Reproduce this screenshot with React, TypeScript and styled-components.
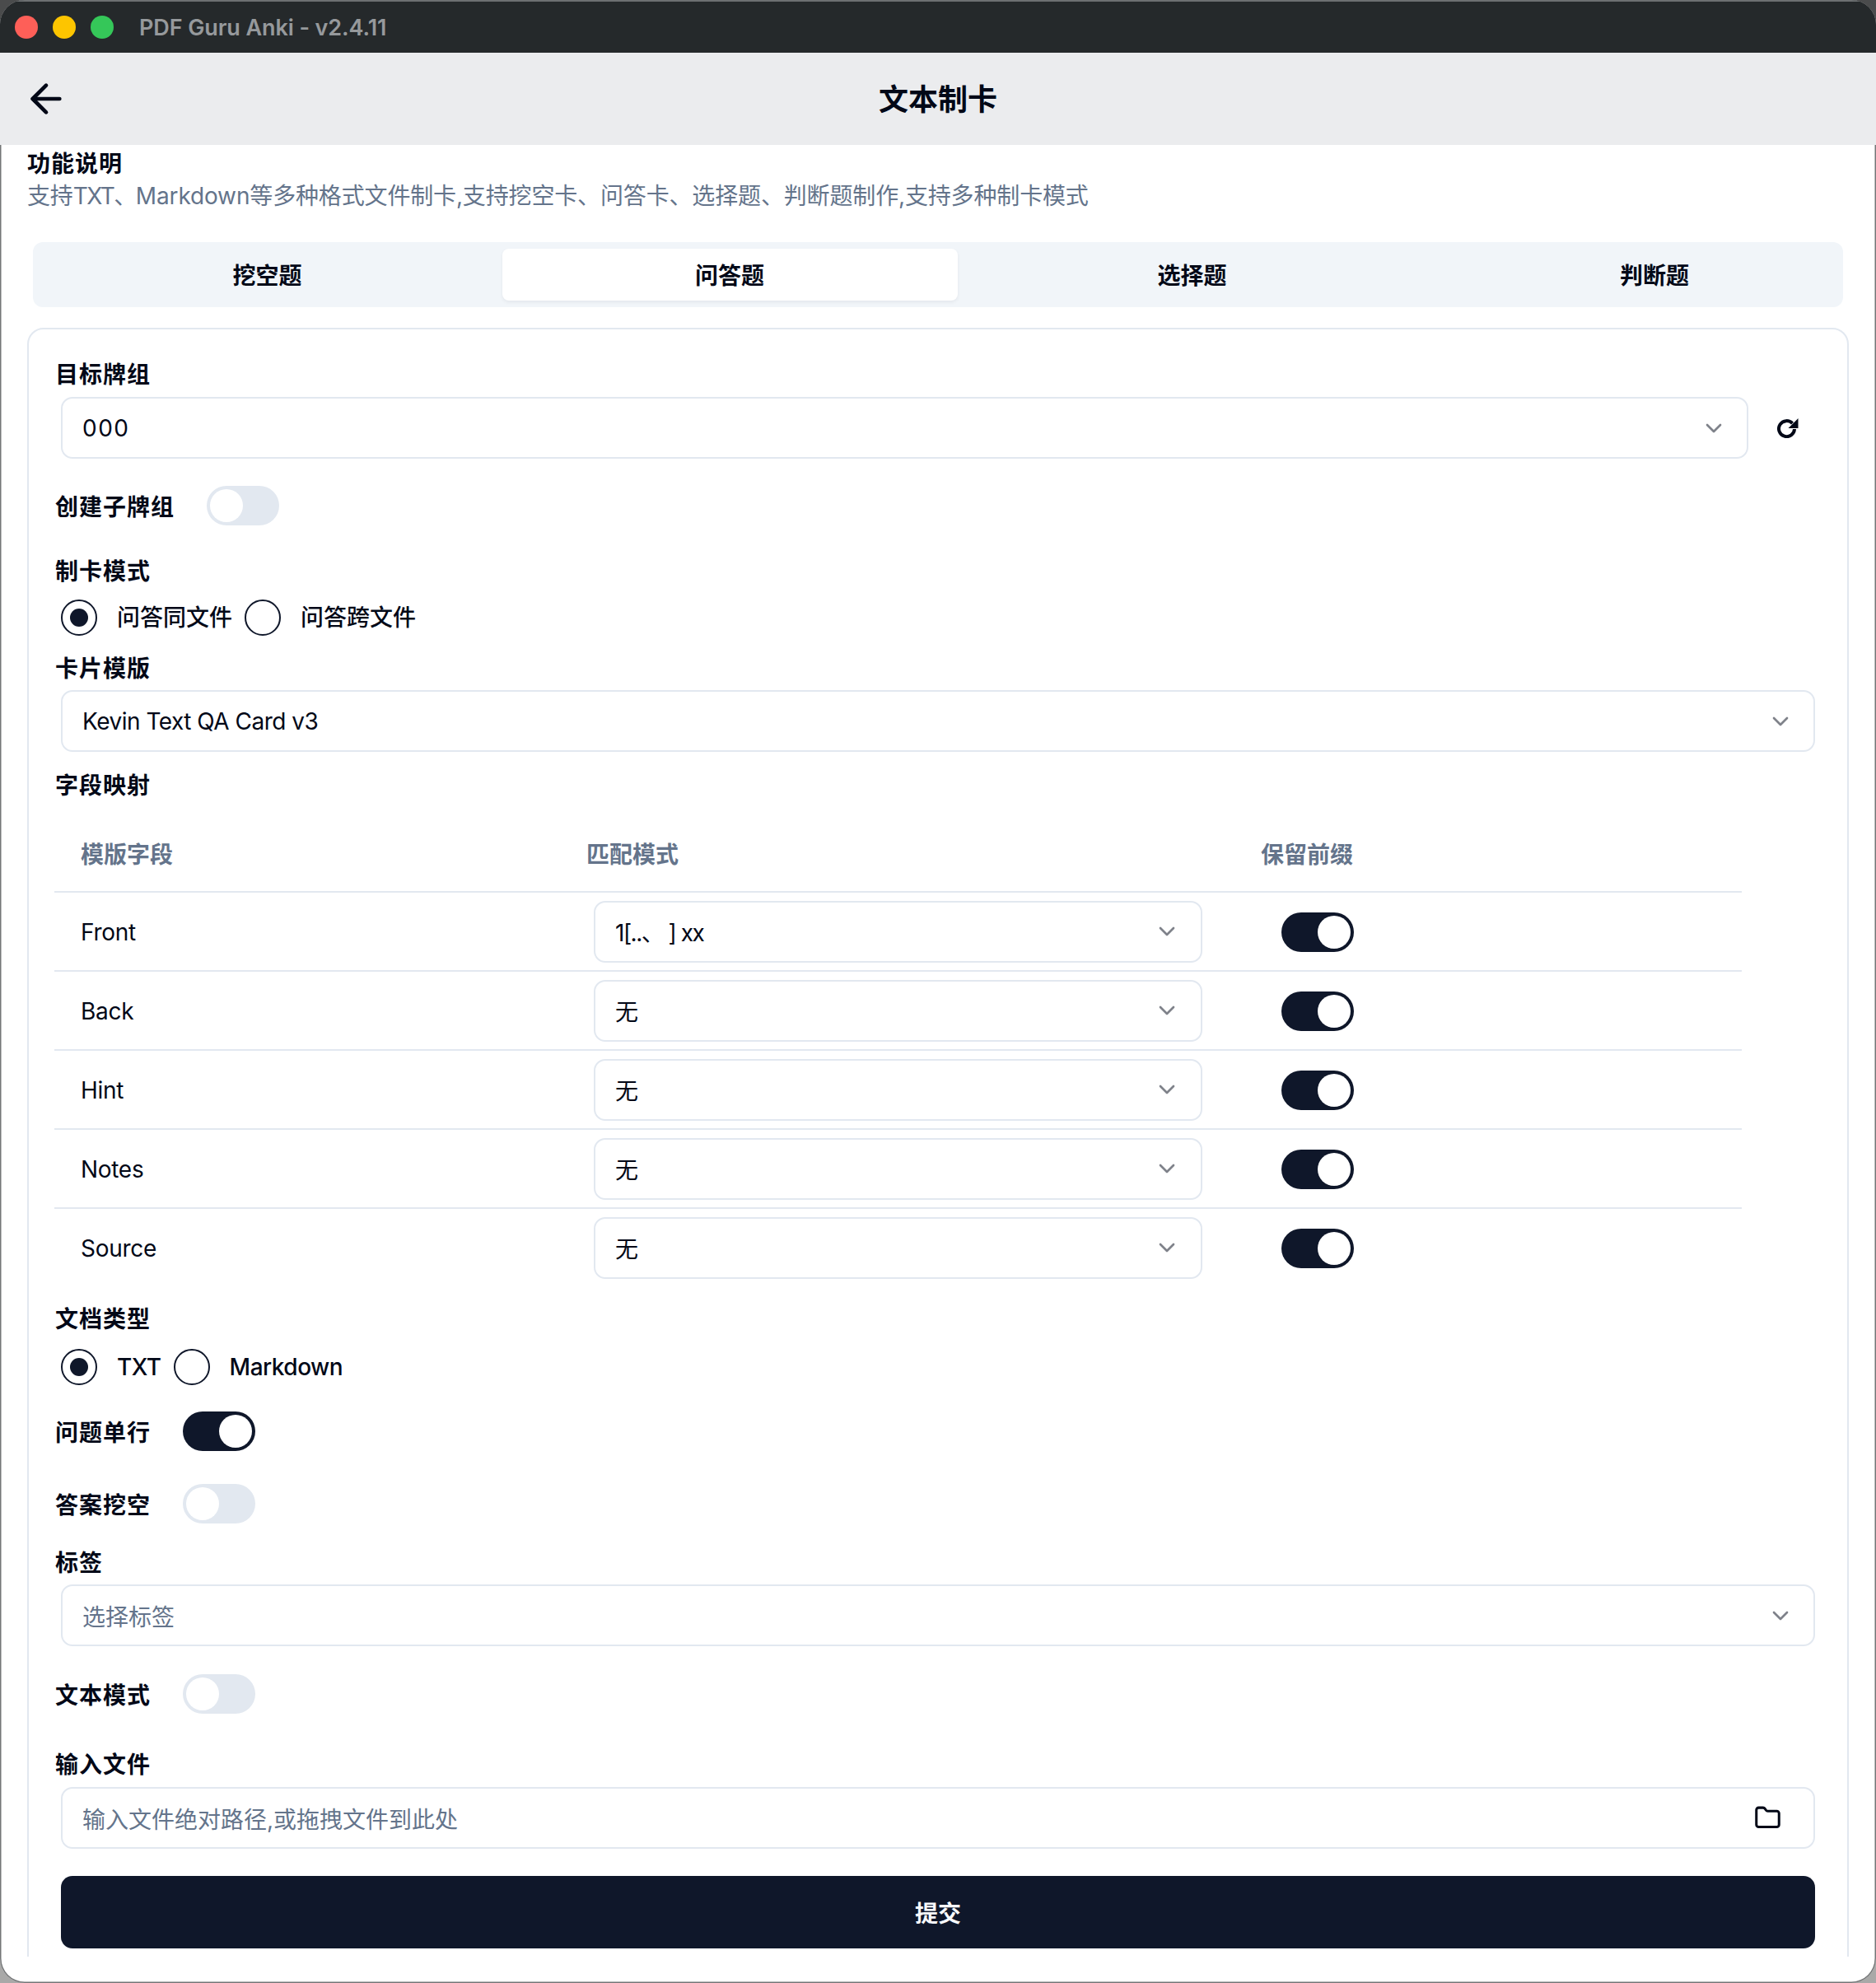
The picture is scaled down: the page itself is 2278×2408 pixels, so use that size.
import React from 'react';
import styled, { createGlobalStyle } from 'styled-components';
import { ArrowLeft, ChevronDown, Folder } from 'lucide-react';

const GlobalStyle = createGlobalStyle`
  html, body {
    margin: 0;
    padding: 0;
    width: 2278px;
    height: 2408px;
    overflow: hidden;
  }

  * {
    box-sizing: border-box;
  }

  body {
    font-family: Inter, "Noto Sans CJK SC", sans-serif;
    font-size: 28px;
    color: #020817;
  }
`;

const Desktop = styled.div`
  width: 2278px;
  height: 2408px;
  background: linear-gradient(180deg, #4a4b4c 0%, #4a4b4c 5%, #a9a9a8 95%, #a9a9a8 100%);
`;

const Window = styled.div`
  width: 2278px;
  height: 2408px;
  border-radius: 30px;
  overflow: hidden;
  background: #ffffff;
  display: flex;
  flex-direction: column;
  box-shadow: inset 0 0 0 1.5px rgba(70, 72, 74, 0.75);
`;

const TitleBar = styled.div`
  height: 64px;
  flex: none;
  background: #25292b;
  border-top: 2px solid #6d7072;
  display: flex;
  align-items: center;
  padding-left: 18px;
`;

const Light = styled.span<{ $color: string }>`
  width: 28px;
  height: 28px;
  border-radius: 50%;
  background: ${p => p.$color};
  margin-right: 18px;
  flex: none;
`;

const WindowTitle = styled.span`
  margin-left: 13px;
  font-size: 27px;
  font-weight: 600;
  letter-spacing: -0.1px;
  color: #96999c;
  white-space: nowrap;
`;

const NavBar = styled.div`
  height: 112px;
  flex: none;
  background: #ebecee;
  position: relative;
  display: flex;
  align-items: center;
  justify-content: center;
  padding-bottom: 5px;
`;

const BackButton = styled.div`
  position: absolute;
  left: 28px;
  top: 28px;
  width: 56px;
  height: 56px;
  color: #020817;
`;

const NavTitle = styled.div`
  font-size: 36px;
  font-weight: 700;
  font-family: "Noto Sans CJK SC", sans-serif;
`;

const Content = styled.div`
  height: 2200px;
  flex: none;
  padding: 1px 33px 0;
  overflow: hidden;
`;

const IntroTitle = styled.div`
  font-family: "Noto Sans CJK SC", sans-serif;
  font-weight: 700;
  line-height: 40px;
  letter-spacing: 1px;
`;

const IntroText = styled.div`
  font-family: Inter, "Noto Sans CJK SC", sans-serif;
  line-height: 40px;
  padding-top: 1px;
  height: 40px;
  letter-spacing: -0.15px;
  color: #64748b;
  white-space: nowrap;
`;

const TightLatin = styled.span`
  letter-spacing: -1.5px;
`;

const TabList = styled.div`
  margin: 37px 7px 0;
  height: 79px;
  padding: 8px;
  background: #f1f5f9;
  border-radius: 12px;
  display: grid;
  grid-template-columns: repeat(4, 553px);
  column-gap: 8.5px;
  overflow: hidden;
`;

const Tab = styled.div<{ $active?: boolean }>`
  display: flex;
  align-items: center;
  justify-content: center;
  padding-bottom: 2px;
  font-family: "Noto Sans CJK SC", sans-serif;
  font-weight: 700;
  font-size: 28px;
  border-radius: 8px;
  background: ${p => (p.$active ? '#ffffff' : 'transparent')};
  box-shadow: ${p => (p.$active ? '0 2px 4px rgba(15, 23, 42, 0.06)' : 'none')};
`;

const Card = styled.div`
  margin-top: 25px;
  border: 2px solid #e2e8f0;
  border-radius: 20px;
  padding: 33px 32px 40px;
  height: 2100px;
`;

const Label = styled.div<{ $top?: number }>`
  font-family: "Noto Sans CJK SC", sans-serif;
  font-weight: 700;
  font-size: 28px;
  line-height: 40px;
  letter-spacing: 1px;
  margin-top: ${p => p.$top ?? 0}px;
  white-space: nowrap;
`;

const Field = styled.div<{ $top?: number; $width?: number }>`
  height: 75px;
  margin: ${p => p.$top ?? 8}px 7px 0;
  width: ${p => (p.$width ? `${p.$width}px` : 'auto')};
  border: 2px solid #e2e8f0;
  border-radius: 14px;
  background: #ffffff;
  display: flex;
  align-items: center;
  justify-content: space-between;
  padding: 0 24px 0 24px;
  flex: ${p => (p.$width ? 'none' : 'initial')};
`;

const FieldText = styled.span<{ $muted?: boolean; $tight?: boolean }>`
  font-family: Inter, "Noto Sans CJK SC", sans-serif;
  color: ${p => (p.$muted ? '#64748b' : '#020817')};
  letter-spacing: ${p => (p.$tight ? '-0.5px' : 'normal')};
  white-space: nowrap;
`;

const DeckText = styled(FieldText)`
  letter-spacing: 1.5px;
`;

const ModeText = styled(FieldText)`
  letter-spacing: -1.5px;
`;

const Chevron = styled(ChevronDown)`
  width: 32px;
  height: 32px;
  color: #020817;
  opacity: 0.5;
  flex: none;
`;

const DeckRow = styled.div`
  display: flex;
  align-items: center;
  margin-top: 9px;
`;

const DeckField = styled(Field)`
  flex: 1;
  margin: 0 0 0 7px;
`;

const RefreshSlot = styled.div`
  flex: none;
  width: 88px;
  display: flex;
  justify-content: center;
  padding-right: 7px;
  padding-left: 14px;
`;

const SwitchRow = styled.div<{ $top: number }>`
  display: flex;
  align-items: center;
  gap: 39px;
  margin-top: ${p => p.$top}px;
`;

const Track = styled.div<{ $on?: boolean }>`
  width: 88px;
  height: 48px;
  flex: none;
  border-radius: 24px;
  padding: 4px;
  background: ${p => (p.$on ? '#0f172a' : '#e2e8f0')};
  display: flex;
  justify-content: ${p => (p.$on ? 'flex-end' : 'flex-start')};
`;

const Knob = styled.span`
  width: 40px;
  height: 100%;
  border-radius: 50%;
  background: #ffffff;
`;

const RadioGroup = styled.div<{ $top: number }>`
  display: flex;
  align-items: center;
  margin: ${p => p.$top}px 0 0 7px;
  gap: 15px;
`;

const RadioItem = styled.div`
  display: flex;
  align-items: center;
  gap: 24px;
`;

const RadioMark = styled.span<{ $checked?: boolean }>`
  width: 44px;
  height: 44px;
  border-radius: 50%;
  border: 2.5px solid #0f172a;
  display: flex;
  align-items: center;
  justify-content: center;
  flex: none;

  &::after {
    content: '';
    width: 22px;
    height: 22px;
    border-radius: 50%;
    background: ${p => (p.$checked ? '#0f172a' : 'transparent')};
  }
`;

const RadioText = styled.span<{ $latin?: boolean }>`
  font-family: Inter, "Noto Sans CJK SC", sans-serif;
  font-weight: 500;
  line-height: 40px;
  letter-spacing: ${p => (p.$latin ? '-0.5px' : 'normal')};
  white-space: nowrap;
`;

const Table = styled.div`
  width: 2049px;
  margin-top: 17px;
  margin-left: -1px;
`;

const TableRow = styled.div<{ $last?: boolean; $header?: boolean }>`
  display: grid;
  grid-template-columns: 614px 819px 616px;
  align-items: center;
  height: ${p => (p.$header ? 95 : p.$last ? 94 : 96)}px;
  border-bottom: ${p => (p.$last ? 'none' : '2px solid #e2e8f0')};
`;

const HeadCell = styled.div`
  padding-left: 32px;
  font-family: "Noto Sans CJK SC", sans-serif;
  font-weight: 700;
  color: #64748b;
`;

const NameCell = styled.div`
  padding: 2px 0 0 32px;
  letter-spacing: -0.3px;
`;

const SelectCell = styled.div`
  padding-left: 35px;
`;

const MapField = styled(Field)`
  margin: 0 0 0 6px;
  padding: 0 25px 0 24px;
`;

const SwitchCell = styled.div`
  padding: 1px 0 0 57px;
`;

const FolderIcon = styled(Folder)`
  width: 33px;
  height: 33px;
  color: #020817;
  margin-right: 15px;
  stroke-width: 2.2;
`;

const SubmitButton = styled.div`
  margin: 33px 7px 0;
  height: 88px;
  border-radius: 14px;
  background: #0f172a;
  color: #f8fafc;
  display: flex;
  align-items: center;
  justify-content: center;
  font-family: "Noto Sans CJK SC", sans-serif;
  font-weight: 700;
`;

const Switch: React.FC<{ on?: boolean }> = ({ on }) => (
  <Track $on={on}>
    <Knob />
  </Track>
);

const Refresh = () => (
  <svg width="26" height="24" viewBox="0 0 26 24" fill="none">
    <path d="M18.5 6.2A9.5 9.5 0 1 0 21 13" stroke="#020817" strokeWidth="4" />
    <path d="M25.5 0V12H13.5Z" fill="#020817" />
  </svg>
);

const fields = [
  { name: 'Front', mode: '1[..、 ] xx' },
  { name: 'Back', mode: '无' },
  { name: 'Hint', mode: '无' },
  { name: 'Notes', mode: '无' },
  { name: 'Source', mode: '无' },
];

export default function App() {
  return (
    <>
      <GlobalStyle />
      <Desktop>
        <Window>
          <TitleBar>
            <Light $color="#fe5f58" />
            <Light $color="#fdc500" />
            <Light $color="#35c759" />
            <WindowTitle>PDF Guru Anki - v2.4.11</WindowTitle>
          </TitleBar>
          <NavBar>
            <BackButton>
              <ArrowLeft size={56} />
            </BackButton>
            <NavTitle>文本制卡</NavTitle>
          </NavBar>
          <Content>
            <IntroTitle>功能说明</IntroTitle>
            <IntroText>
              支持<TightLatin>TXT、</TightLatin>Markdown等多种格式文件制卡,支持挖空卡、问答卡、选择题、判断题制作,支持多种制卡模式
            </IntroText>
            <TabList>
              <Tab>挖空题</Tab>
              <Tab $active>问答题</Tab>
              <Tab>选择题</Tab>
              <Tab>判断题</Tab>
            </TabList>
            <Card>
              <Label>目标牌组</Label>
              <DeckRow>
                <DeckField>
                  <DeckText>000</DeckText>
                  <Chevron />
                </DeckField>
                <RefreshSlot>
                  <Refresh />
                </RefreshSlot>
              </DeckRow>
              <SwitchRow $top={33}>
                <Label>创建子牌组</Label>
                <Switch />
              </SwitchRow>
              <Label $top={34}>制卡模式</Label>
              <RadioGroup $top={16}>
                <RadioItem>
                  <RadioMark $checked />
                  <RadioText>问答同文件</RadioText>
                </RadioItem>
                <RadioItem>
                  <RadioMark />
                  <RadioText>问答跨文件</RadioText>
                </RadioItem>
              </RadioGroup>
              <Label $top={18}>卡片模版</Label>
              <Field>
                <FieldText $tight>Kevin Text QA Card v3</FieldText>
                <Chevron />
              </Field>
              <Label $top={19}>字段映射</Label>
              <Table>
                <TableRow $header>
                  <HeadCell>模版字段</HeadCell>
                  <HeadCell>匹配模式</HeadCell>
                  <HeadCell>保留前缀</HeadCell>
                </TableRow>
                {fields.map((f, i) => (
                  <TableRow key={f.name} $last={i === fields.length - 1}>
                    <NameCell>{f.name}</NameCell>
                    <SelectCell>
                      <MapField $width={739}>
                        <ModeText>{f.mode}</ModeText>
                        <Chevron />
                      </MapField>
                    </SelectCell>
                    <SwitchCell>
                      <Switch on />
                    </SwitchCell>
                  </TableRow>
                ))}
              </Table>
              <Label $top={18}>文档类型</Label>
              <RadioGroup $top={18}>
                <RadioItem>
                  <RadioMark $checked />
                  <RadioText $latin>TXT</RadioText>
                </RadioItem>
                <RadioItem>
                  <RadioMark />
                  <RadioText $latin>Markdown</RadioText>
                </RadioItem>
              </RadioGroup>
              <SwitchRow $top={32}>
                <Label>问题单行</Label>
                <Switch on />
              </SwitchRow>
              <SwitchRow $top={40}>
                <Label>答案挖空</Label>
                <Switch />
              </SwitchRow>
              <Label $top={26}>标签</Label>
              <Field>
                <FieldText $muted>选择标签</FieldText>
                <Chevron />
              </Field>
              <SwitchRow $top={34}>
                <Label>文本模式</Label>
                <Switch />
              </SwitchRow>
              <Label $top={40}>输入文件</Label>
              <Field $top={9}>
                <FieldText $muted>输入文件绝对路径,或拖拽文件到此处</FieldText>
                <FolderIcon />
              </Field>
              <SubmitButton>提交</SubmitButton>
            </Card>
          </Content>
        </Window>
      </Desktop>
    </>
  );
}
